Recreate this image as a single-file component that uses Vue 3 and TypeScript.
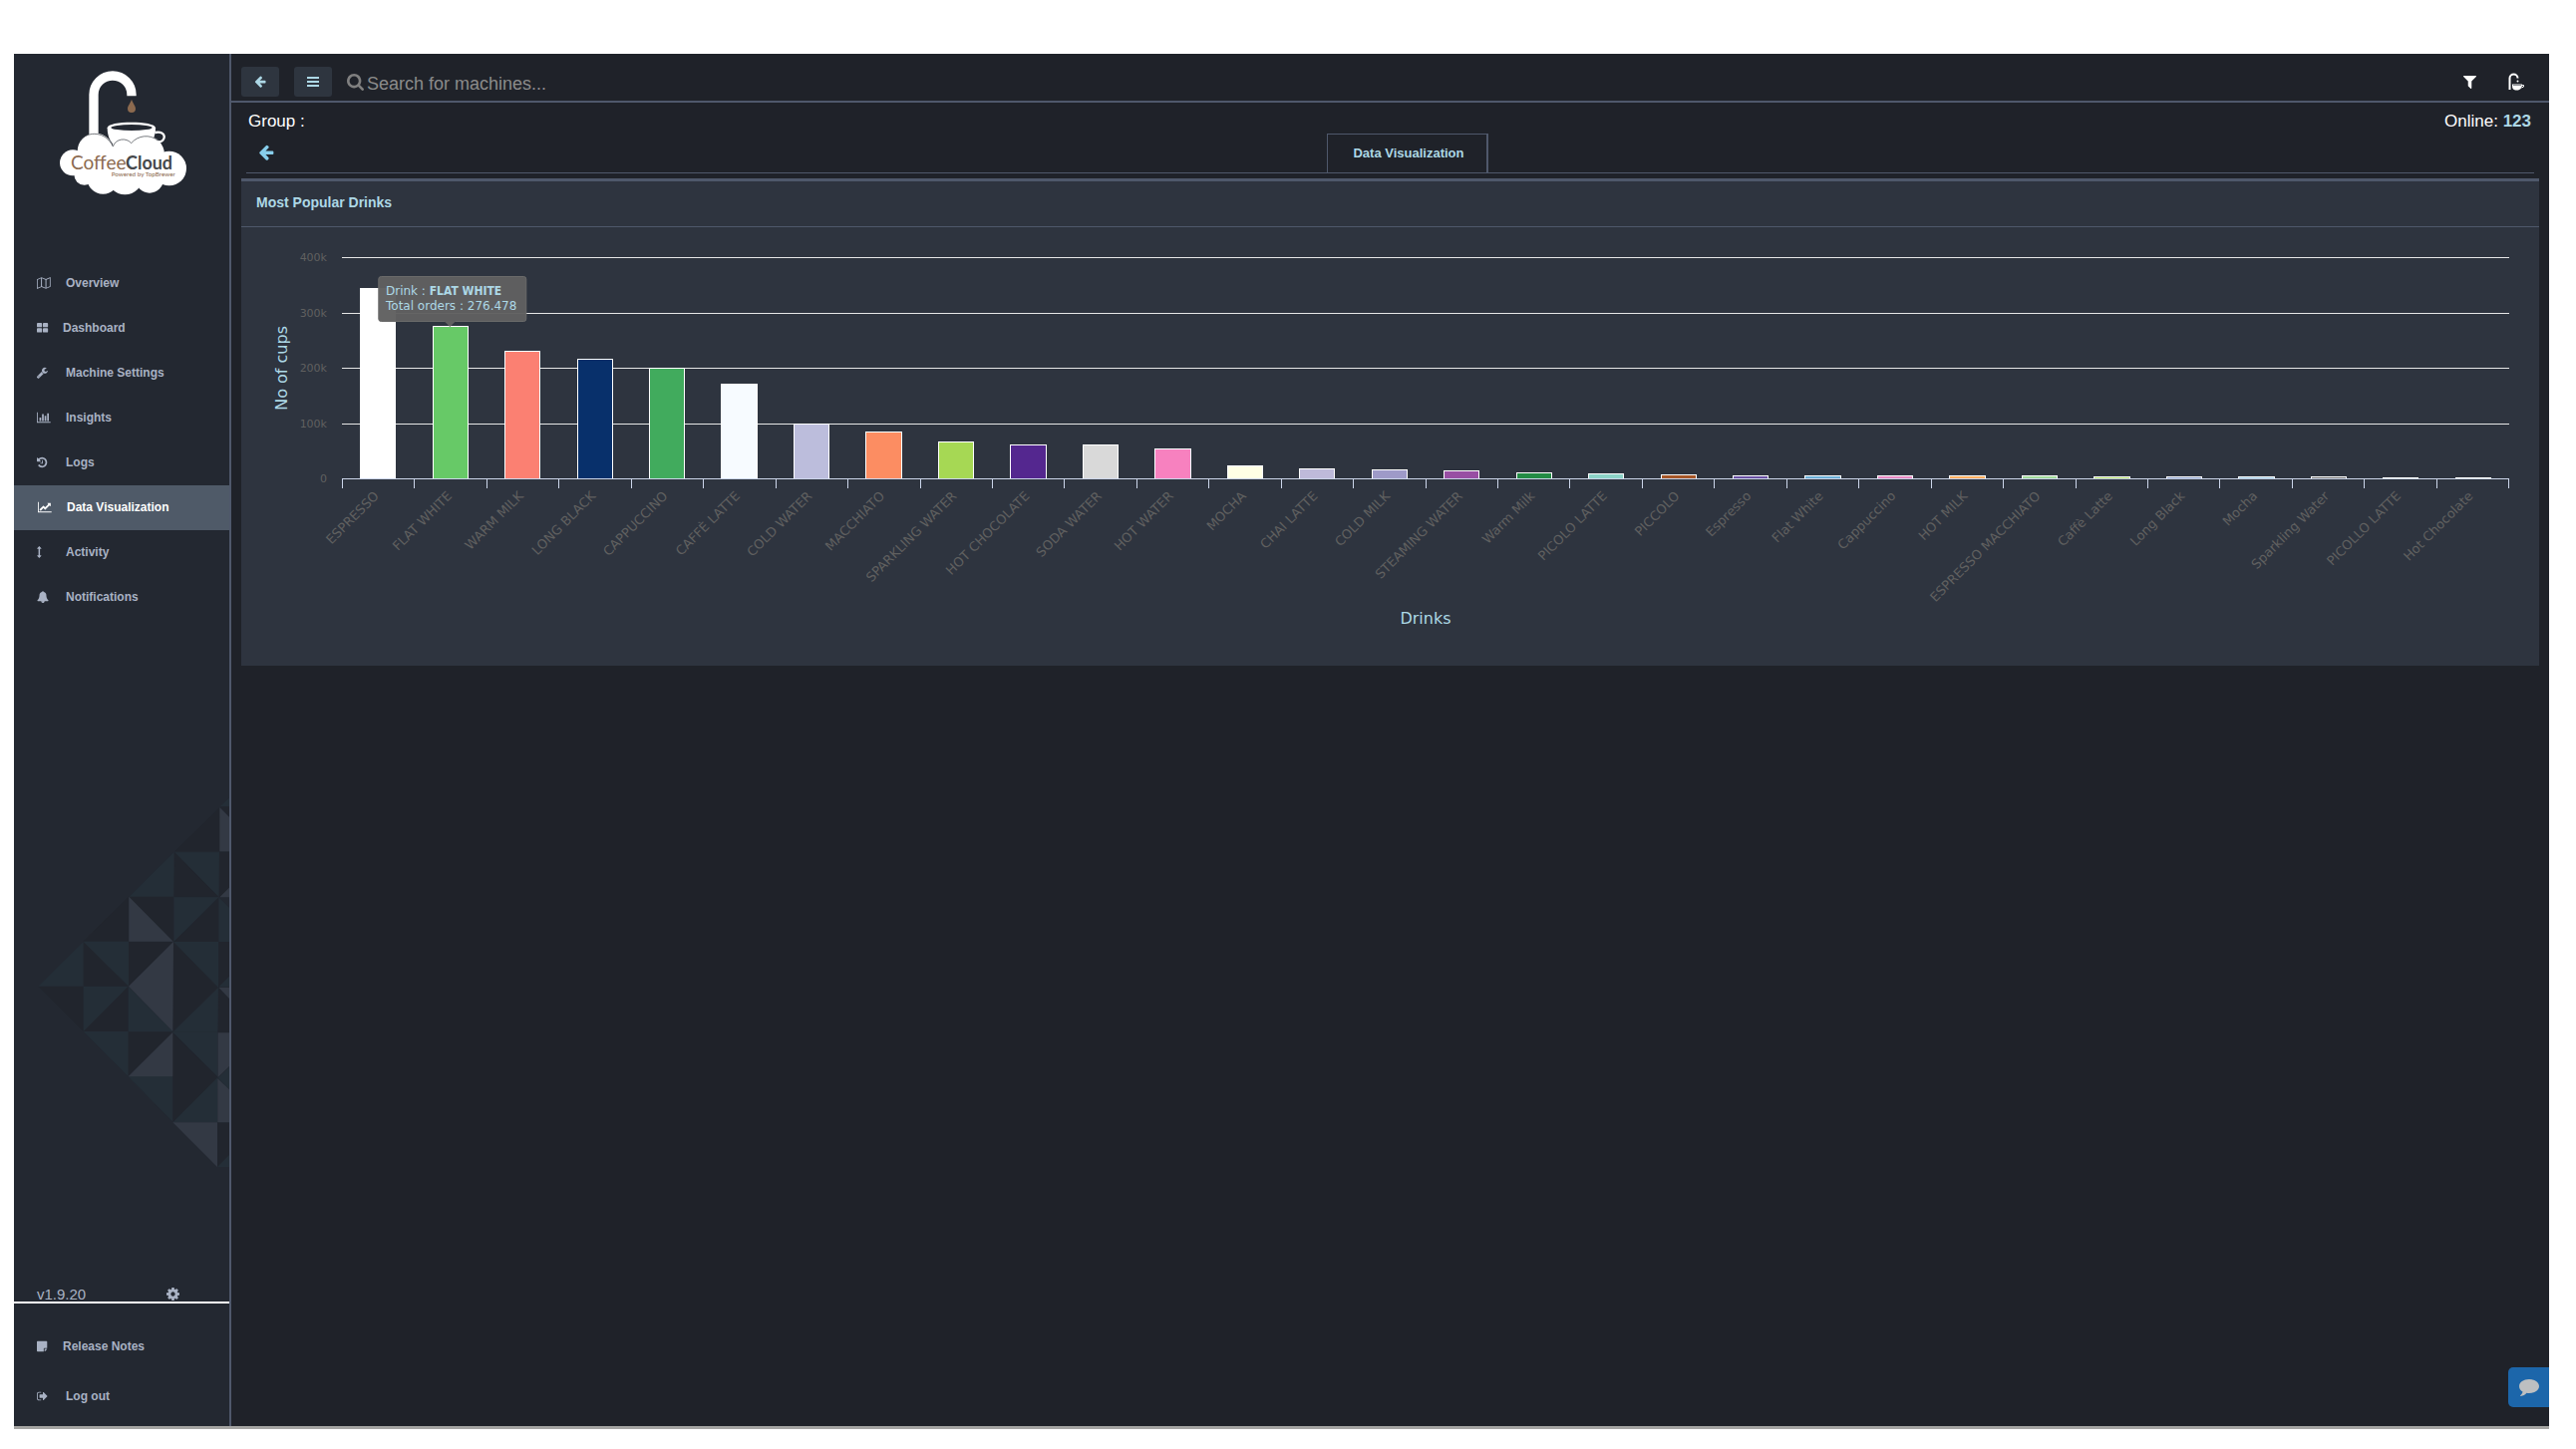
<script setup lang="ts">
interface Icon {
  box: string
  d: string
}
interface NavItem {
  label: string
  icon: Icon
  tight?: boolean
  active?: boolean
}
interface Drink {
  name: string
  cups: number
  color: string
}

const arrowLeft =
  'M1664 896v128q0 53-32.5 90.5t-84.5 37.5h-704l293 294q38 36 38 90t-38 90l-75 76q-37 37-90 37-52 0-91-37l-651-652q-37-37-37-90 0-52 37-91l651-650q38-38 91-38 52 0 90 38l75 74q38 38 38 91t-38 91l-293 293h704q52 0 84.5 37.5t32.5 90.5z'

const nav: NavItem[] = [
  {
    label: 'Overview',
    icon: {
      box: '0 0 2048 1792',
      d: 'M0 320L690 20L1350 290L2048 10V1450L1350 1760L690 1490L0 1780zM120 400V1600L610 1400V190zM760 180V1390L1280 1600V400zM1430 400V1600L1928 1370V190z'
    }
  },
  {
    label: 'Dashboard',
    tight: true,
    icon: {
      box: '0 0 1664 1792',
      d: 'M128 160h512q128 0 128 128v384q0 128-128 128h-512q-128 0-128-128v-384q0-128 128-128zM1024 160h512q128 0 128 128v384q0 128-128 128h-512q-128 0-128-128v-384q0-128 128-128zM128 928h512q128 0 128 128v384q0 128-128 128h-512q-128 0-128-128v-384q0-128 128-128zM1024 928h512q128 0 128 128v384q0 128-128 128h-512q-128 0-128-128v-384q0-128 128-128z'
    }
  },
  {
    label: 'Machine Settings',
    icon: {
      box: '90 0 1640 1792',
      d: 'M448 1472q0-26-19-45t-45-19-45 19-19 45 19 45 45 19 45-19 19-45zm644-420l-682 682q-37 37-90 37-52 0-91-37l-106-108q-38-36-38-90 0-53 38-91l681-681q39 98 114.5 173.5t173.5 114.5zm634-435q0 39-23 106-47 134-164.5 217.5t-258.5 83.5q-185 0-316.5-131.5t-131.5-316.5 131.5-316.5 316.5-131.5q58 0 121.5 16.5t107.5 46.5q16 11 16 28t-16 28l-293 169v224l193 107q5-3 79-48.5t135.5-81 70.5-35.5q15 0 23.5 10t8.5 25z'
    }
  },
  {
    label: 'Insights',
    icon: {
      box: '0 0 2048 1792',
      d: 'M640 896v512h-256v-512h256zm384-512v1024h-256v-1024h256zm1024 1152v128h-2048v-1536h128v1408h1920zm-640-896v768h-256v-768h256zm384-384v1152h-256v-1152h256z'
    }
  },
  {
    label: 'Logs',
    icon: {
      box: '128 0 1536 1792',
      d: 'M1664 896q0 156-61 298t-164 245-245 164-298 61q-172 0-327-72.5t-264-204.5q-7-10-6.5-22.5t8.5-20.5l137-138q10-9 25-9 16 2 23 12 73 95 179 147t225 52q104 0 198.5-40.5t163.5-109.5 109.5-163.5 40.5-198.5-40.5-198.5-109.5-163.5-163.5-109.5-198.5-40.5q-98 0-188 35.5t-160 101.5l137 138q31 30 14 69-17 40-59 40h-448q-26 0-45-19t-19-45v-448q0-42 40-59 39-17 69 14l130 129q107-101 244.5-156.5t284.5-55.5q156 0 298 61t245 164 164 245 61 298zm-640-288v448q0 14-9 23t-23 9h-320q-14 0-23-9t-9-23v-64q0-14 9-23t23-9h224v-352q0-14 9-23t23-9h64q14 0 23 9t9 23z'
    }
  },
  {
    label: 'Data Visualization',
    active: true,
    icon: {
      box: '0 0 2048 1792',
      d: 'M2048 1536v128h-2048v-1536h128v1408h1920zm-128-1248v435q0 21-19.5 29.5t-35.5-7.5l-121-121-633 633q-10 10-23 10t-23-10l-233-233-416 416-192-192 585-585q10-10 23-10t23 10l233 233 464-464-121-121q-16-16-7.5-35.5t29.5-19.5h435q14 0 23 9t9 23z'
    }
  },
  {
    label: 'Activity',
    icon: {
      box: '0 0 700 1792',
      d: 'M352 0l320 352q20 64-48 64h-160v960h160q68 0 48 64l-320 352-320-352q-20-64 48-64h160v-960h-160q-68 0-48-64z'
    }
  },
  {
    label: 'Notifications',
    icon: {
      box: '0 0 1792 1792',
      d: 'M912 1696q0-16-16-16-59 0-101.5-42.5t-42.5-101.5q0-16-16-16t-16 16q0 73 51.5 124.5t124.5 51.5q16 0 16-16zm816-288q0 52-38 90t-90 38h-448q0 106-75 181t-181 75-181-75-75-181h-448q-52 0-90-38t-38-90q50-42 91-88t85-119.5 74.5-158.5 50-206 19.5-260q0-152 117-282.5t307-158.5q-8-19-8-39 0-40 28-68t68-28 68 28 28 68q0 20-8 39 190 28 307 158.5t117 282.5q0 139 19.5 260t50 206 74.5 158.5 85 119.5 91 88z'
    }
  }
]

const footerNav: NavItem[] = [
  {
    label: 'Release Notes',
    tight: true,
    icon: {
      box: '0 0 1536 1792',
      d: 'M96 128h1344q96 0 96 96v928h-416q-96 0-96 96v416h-928q-96 0-96-96v-1344q0-96 96-96zM1152 1280h376q-12 64-56 108l-212 212q-44 44-108 56z'
    }
  },
  {
    label: 'Log out',
    icon: {
      box: '64 0 1600 1792',
      d: 'M704 1440q0 4 1 20t.5 26.5-3 23.5-10 19.5-20.5 6.5h-320q-119 0-203.5-84.5t-84.5-203.5v-704q0-119 84.5-203.5t203.5-84.5h320q13 0 22.5 9.5t9.5 22.5q0 4 1 20t.5 26.5-3 23.5-10 19.5-20.5 6.5h-320q-66 0-113 47t-47 113v704q0 66 47 113t113 47h312l11.5 1 11.5 3 8 5.5 7 9 2 13.5zm928-544q0 26-19 45l-544 544q-19 19-45 19t-45-19-19-45v-288h-448q-26 0-45-19t-19-45v-384q0-26 19-45t45-19h448v-288q0-26 19-45t45-19 45 19l544 544q19 19 19 45z'
    }
  }
]

const axisMax = 400000
const yTicks = ['400k', '300k', '200k', '100k', '0']

const drinks: Drink[] = [
  { name: 'ESPRESSO', cups: 345000, color: '#ffffff' },
  { name: 'FLAT WHITE', cups: 276478, color: '#67c967' },
  { name: 'WARM MILK', cups: 231500, color: '#fb8072' },
  { name: 'LONG BLACK', cups: 215500, color: '#08306b' },
  { name: 'CAPPUCCINO', cups: 200500, color: '#41ab5d' },
  { name: 'CAFFÈ LATTE', cups: 170500, color: '#f7fbff' },
  { name: 'COLD WATER', cups: 99500, color: '#bcbddc' },
  { name: 'MACCHIATO', cups: 85000, color: '#fc8d62' },
  { name: 'SPARKLING WATER', cups: 67500, color: '#a6d854' },
  { name: 'HOT CHOCOLATE', cups: 61500, color: '#54278f' },
  { name: 'SODA WATER', cups: 61500, color: '#d9d9d9' },
  { name: 'HOT WATER', cups: 54500, color: '#f781bf' },
  { name: 'MOCHA', cups: 23800, color: '#ffffe5' },
  { name: 'CHAI LATTE', cups: 18500, color: '#bebada' },
  { name: 'COLD MILK', cups: 16500, color: '#9e9ac8' },
  { name: 'STEAMING WATER', cups: 14800, color: '#984ea3' },
  { name: 'Warm Milk', cups: 11000, color: '#238b45' },
  { name: 'PICOLO LATTE', cups: 9200, color: '#8dd3c7' },
  { name: 'PICCOLO', cups: 7400, color: '#a65628' },
  { name: 'Espresso', cups: 5500, color: '#6a51a3' },
  { name: 'Flat White', cups: 5500, color: '#6baed6' },
  { name: 'Cappuccino', cups: 5500, color: '#e78ac3' },
  { name: 'HOT MILK', cups: 5500, color: '#fdae61' },
  { name: 'ESPRESSO MACCHIATO', cups: 5500, color: '#a1d99b' },
  { name: 'Caffè Latte', cups: 3700, color: '#b3de69' },
  { name: 'Long Black', cups: 3700, color: '#8da0cb' },
  { name: 'Mocha', cups: 3700, color: '#9ecae1' },
  { name: 'Sparkling Water', cups: 3700, color: '#737373' },
  { name: 'PICOLLO LATTE', cups: 1900, color: '#ffffff' },
  { name: 'Hot Chocolate', cups: 1900, color: '#ffffff' }
]
const hovered = 'FLAT WHITE'
</script>

<template>
  <div class="page">
    <div class="app">
      <aside class="sidebar">
        <svg class="logo" viewBox="180 94 381 375" role="img" aria-label="CoffeeCloud">
          <path d="M282 300V166a56 56 0 0 1 114 0v4" fill="none" stroke="#fff" stroke-width="28" />
          <path d="M396 180c4 12 12 20 12 28a12 12 0 0 1-24 0c0-8 8-16 12-28z" fill="#8c6a4f" />
          <path d="M323 266c0-22 145-22 145 0 0 26-10 44-26 60h-92c-18-16-27-34-27-60z" fill="#fff" />
          <ellipse cx="396" cy="265" rx="62" ry="9" fill="#232831" />
          <path d="M466 280c38-8 34 30 10 28" fill="none" stroke="#fff" stroke-width="7" />
          <g fill="#fff">
            <circle cx="287" cy="336" r="54" />
            <circle cx="219" cy="371" r="39" />
            <circle cx="254" cy="407" r="31" />
            <circle cx="310" cy="417" r="48" />
            <circle cx="376" cy="413" r="54" />
            <circle cx="450" cy="420" r="42" />
            <circle cx="509" cy="388" r="52" />
            <circle cx="438" cy="346" r="57" />
            <circle cx="370" cy="338" r="38" />
            <path d="M230 345h270v80H240z" />
          </g>
          <g fill="none" stroke="#33383f" stroke-width="2">
            <path d="M240 304c26-30 78-28 100 18 8-24 40-28 55-10 20-24 56-28 80-8" />
          </g>
          <text x="213" y="391" font-size="57" font-weight="400" fill="#8c6a4f">Coffee</text>
          <text x="378" y="391" font-size="54" font-weight="700" fill="#45484b">Cloud</text>
          <text x="335" y="413" font-size="19" fill="#8c6a4f">Powered by TopBrewer</text>
        </svg>

        <nav class="nav main-nav">
          <a
            v-for="item in nav"
            :key="item.label"
            href="#"
            class="nav-item"
            :class="{ active: item.active, tight: item.tight }"
          >
            <svg class="nav-icon" :viewBox="item.icon.box" preserveAspectRatio="xMinYMid" fill-rule="evenodd">
              <path :d="item.icon.d" />
            </svg>
            {{ item.label }}
          </a>
        </nav>

        <div class="pattern">
          <svg viewBox="110 50 579 1161" aria-hidden="true">
            <g fill="#21252d">
              <path d="M250 494V628H386zM386 494H521L386 628zM521 494L656 632 519 764zM385 628V764H250zM114 628H250V764z" />
              <path d="M385 766H519L385 900zM519 766L654 902 519 1036zM653 1038H690V1172H653z" />
              <path d="M250 492L386 358V492zM387 358H522V493zM657 360V494H522zM525 225L522 358H656zM659 225H690V358H659z" />
              <path d="M525 222L660 90V222zM662 88H690V118zM657 494H690V598L657 632zM657 634L690 668V768H655z" />
            </g>
            <g fill="#242e37">
              <path d="M114 628L250 494V628zM250 494H386V628zM521 494H656V632zM250 628H385L250 764zM385 628L519 764H385zM656 632L654 766H519z" />
              <path d="M250 764H385V900zM519 766H654V900zM385 900H519V1036zM654 902V1038H519zM653 1172L690 1135V1172z" />
              <path d="M522 360H657L522 494zM657 360L690 392V494H657zM388 358L522 225V358zM525 225H659L657 358z" />
              <path d="M662 86L690 60V86zM657 630L690 597V630zM655 904L690 870V940z" />
            </g>
            <g fill="#333944">
              <path d="M521 494L386 628 519 764zM519 766V900H385zM519 1038H653V1172zM387 358V493H520zM660 360L690 330V360z" />
              <path d="M660 90L690 120V222H660zM658 632H690V666zM655 768H690V868L655 902zM654 906L690 940V1038H654z" />
            </g>
          </svg>
        </div>

        <div class="version">
          <span>v1.9.20</span>
          <button type="button" class="bare" aria-label="Settings">
            <svg class="cog" viewBox="128 128 1536 1536">
              <path
                d="M1152 896q0-106-75-181t-181-75-181 75-75 181 75 181 181 75 181-75 75-181zm512-109v222q0 12-8 23t-20 13l-185 28q-19 54-39 91 35 50 107 138 10 12 10 25t-9 23q-27 37-99 108t-94 71q-12 0-26-9l-138-108q-44 23-91 38-16 136-29 186-7 28-36 28h-222q-14 0-24.5-8.5t-11.5-21.5l-28-184q-49-16-90-37l-141 107q-10 9-25 9-14 0-25-11-126-114-165-168-7-10-7-23 0-12 8-23 15-21 51-66.5t54-70.5q-27-50-41-99l-183-27q-13-2-21-12.5t-8-23.5v-222q0-12 8-23t19-13l186-28q14-46 39-92-40-57-107-138-10-12-10-24 0-10 9-23 26-36 98.5-107.5t94.5-71.5q13 0 26 10l138 107q44-23 91-38 16-136 29-186 7-28 36-28h222q14 0 24.5 8.5t11.5 21.5l28 184q49 16 90 37l142-107q9-9 24-9 13 0 25 10 129 119 165 170 7 8 7 22 0 12-8 23-15 21-51 66.5t-54 70.5q26 50 41 98l183 28q13 2 21 12.5t8 23.5z"
              />
            </svg>
          </button>
        </div>
        <nav class="nav footer-nav">
          <a
            v-for="item in footerNav"
            :key="item.label"
            href="#"
            class="nav-item"
            :class="{ tight: item.tight }"
          >
            <svg class="nav-icon" :viewBox="item.icon.box" preserveAspectRatio="xMinYMid">
              <path :d="item.icon.d" />
            </svg>
            {{ item.label }}
          </a>
        </nav>
      </aside>

      <main class="main">
        <header class="topbar">
          <button type="button" class="square" aria-label="Back">
            <svg class="glyph" viewBox="64 100 1664 1664"><path :d="arrowLeft" /></svg>
          </button>
          <button type="button" class="square" aria-label="Menu">
            <svg class="glyph" viewBox="0 0 12 12"><path d="M0 1h12v2H0zM0 5h12v2H0zM0 9h12v2H0z" /></svg>
          </button>
          <label class="search">
            <svg class="search-icon" viewBox="64 128 1664 1664">
              <path
                d="M1216 832q0-185-131.5-316.5t-316.5-131.5-316.5 131.5-131.5 316.5 131.5 316.5 316.5 131.5 316.5-131.5 131.5-316.5zm512 832q0 52-38 90t-90 38q-54 0-90-38l-343-342q-179 124-399 124-143 0-273.5-55.5t-225-150-150-225-55.5-273.5 55.5-273.5 150-225 225-150 273.5-55.5 273.5 55.5 225 150 150 225 55.5 273.5q0 220-124 399l343 343q37 37 37 90z"
              />
            </svg>
            <input type="text" placeholder="Search for machines..." aria-label="Search for machines" />
          </label>
          <button type="button" class="bare" aria-label="Filter">
            <svg class="filter" viewBox="190 256 1412 1412">
              <path
                d="M1595 295q17 41-14 70l-493 493v742q0 42-39 59-13 5-25 5-27 0-45-19l-256-256q-19-19-19-45v-486l-493-493q-31-29-14-70 17-39 59-39h1280q42 0 59 39z"
              />
            </svg>
          </button>
          <button type="button" class="bare" aria-label="Machines">
            <svg class="tap" viewBox="0 0 16 18">
              <path d="M1.500 17V5.500a4 4 0 0 1 8 0" fill="none" stroke="#fff" stroke-width="2" />
              <circle cx="9.500" cy="8.500" r="1" />
              <path d="M4 11.500h10c0 3-1 4-2 5l-2 1H7l-2-1c-1-1-1-3-1-5z" />
              <path d="M5 12.500h8" stroke="#8b8d92" stroke-width="1" />
              <path d="M13.500 12.500h2v1.500l-2 1" fill="none" stroke="#fff" stroke-width="1" />
            </svg>
          </button>
        </header>

        <div class="status">
          <span>Group :</span>
          <span>Online: <strong>123</strong></span>
        </div>

        <div class="tabs">
          <button type="button" class="bare back" aria-label="Back to previous view">
            <svg viewBox="64 100 1664 1664"><path :d="arrowLeft" /></svg>
          </button>
          <button type="button" class="tab">Data Visualization</button>
        </div>

        <section class="panel">
          <h2>Most Popular Drinks</h2>
          <div class="chart">
            <div class="y-title"><span>No of cups</span></div>
            <div class="y-labels">
              <span v-for="tick in yTicks" :key="tick">{{ tick }}</span>
            </div>
            <div class="plot">
              <div class="lines"><i v-for="n in 4" :key="n"></i></div>
              <div class="bars">
                <div v-for="drink in drinks" :key="drink.name" class="slot">
                  <div
                    class="bar"
                    :style="{ height: (drink.cups / axisMax) * 100 + '%', background: drink.color }"
                  >
                    <div v-if="drink.name === hovered" class="tooltip">
                      Drink : <b>FLAT WHITE</b><br />Total orders : 276.478
                    </div>
                  </div>
                </div>
              </div>
            </div>
            <div class="x-axis">
              <div v-for="drink in drinks" :key="drink.name" class="tick">
                <span>{{ drink.name }}</span>
              </div>
            </div>
            <div class="x-title">Drinks</div>
          </div>
        </section>
      </main>

      <button type="button" class="chat" aria-label="Open chat">
        <svg viewBox="0 0 20 17">
          <path
            d="M10 0c5.500 0 10 3 10 7s-4.500 7-10 7c-1 0-1.700 0-2.500-.2C6 15.500 4 16.700 1.500 17c-.6 0-.5-.5-.2-.8 1.200-1 2-2 2.200-3.600C1.300 11.300 0 9.300 0 7c0-4 4.500-7 10-7z"
          />
        </svg>
      </button>
    </div>
  </div>
</template>

<style>
body {
  margin: 0;
  background: #fff;
}
</style>

<style scoped>
.page {
  box-sizing: border-box;
  display: flex;
  min-height: 100vh;
  padding: 54px 27px 20px 14px;
  font-family: 'Liberation Sans', Arial, sans-serif;
}
.app {
  position: relative;
  display: flex;
  flex: 1;
  min-width: 0;
  background: #1f2229;
  border-bottom: 3px solid #a5a5a3;
}
svg {
  display: block;
  fill: currentColor;
}
button {
  font: inherit;
  cursor: pointer;
}
.bare {
  padding: 0;
  border: 0;
  background: none;
  color: inherit;
}

/* Sidebar */
.sidebar {
  display: flex;
  flex-direction: column;
  flex: none;
  width: 216px;
  border-right: 2px solid #4f586b;
  background: #232831;
  color: #a9b2c4;
}
.logo {
  width: 127px;
  height: 125px;
  margin: 17px 0 66px 46px;
  font-family: Lato, sans-serif;
}
.nav {
  display: flex;
  flex-direction: column;
}
.nav-item {
  box-sizing: border-box;
  display: flex;
  align-items: center;
  gap: 13px;
  height: 45px;
  padding-left: 23px;
  color: inherit;
  font-size: 12px;
  font-weight: 700;
  text-decoration: none;
}
.main-nav .nav-item {
  padding-bottom: 2px;
}
.nav-item.tight {
  gap: 10px;
}
.nav-item.active {
  padding-left: 24px;
  background: #4f5a68;
  color: #fff;
}
.nav-icon {
  width: 16px;
  height: 12px;
}
.pattern {
  display: flex;
  flex: 1;
  align-items: flex-end;
  justify-content: flex-end;
  padding-bottom: 106px;
}
.pattern svg {
  width: 193px;
  height: 387px;
}
.version {
  display: flex;
  align-items: center;
  justify-content: space-between;
  height: 16px;
  padding: 0 50px 0 23px;
  border-bottom: 2px solid #fff;
  font-size: 15px;
}
.cog {
  width: 13px;
  height: 13px;
}
.footer-nav {
  padding: 18px 0 5px;
}
.footer-nav .nav-item {
  height: 50px;
}

/* Main column */
.main {
  display: flex;
  flex-direction: column;
  flex: 1;
  min-width: 0;
}
.topbar {
  display: flex;
  align-items: center;
  gap: 15px;
  height: 38px;
  padding: 9px 25px 0 10px;
  border-bottom: 2px solid #4f586b;
  color: #fff;
}
.square {
  display: flex;
  align-items: center;
  justify-content: center;
  width: 38px;
  height: 30px;
  padding: 0;
  border: 0;
  border-radius: 3px;
  background: #2e353f;
  color: #add8e6;
}
.glyph {
  width: 12px;
  height: 12px;
}
.search {
  display: flex;
  flex: 1;
  align-items: center;
  gap: 3px;
  color: #808080;
}
.search-icon {
  width: 17px;
  height: 17px;
}
.search input {
  flex: 1;
  height: 24px;
  margin-top: 4px;
  padding: 0;
  border: 0;
  outline: 0;
  background: none;
  color: #fff;
  font: 18px 'Liberation Sans', Arial, sans-serif;
}
.search input::placeholder {
  color: #8b8b8b;
  opacity: 1;
}
.filter {
  width: 13px;
  height: 13px;
  margin-right: 17px;
}
.tap {
  width: 16px;
  height: 18px;
}
.status {
  display: flex;
  justify-content: space-between;
  height: 25px;
  padding: 6px 18px 0 17px;
  color: #fff;
  font-size: 17px;
  line-height: 25px;
}
.status strong {
  color: #add8e6;
}
.tabs {
  display: grid;
  grid-template-columns: 35px 1fr;
  margin: 0 15px;
  border-bottom: 1px solid #4f586b;
}
.back {
  padding: 0 0 2px 12px;
  color: #87ceeb;
}
.back svg {
  width: 16px;
  height: 16px;
}
.tab {
  justify-self: center;
  height: 39px;
  padding: 0 22px 2px 25px;
  border: 1px solid #4f586b;
  border-width: 1px 2px 0 1px;
  background: none;
  color: #add8e6;
  font-size: 13px;
  font-weight: 700;
}

/* Chart panel */
.panel {
  margin: 5px 10px 0;
  border-top: 3px solid #4f586b;
  background: #2e343f;
}
.panel h2 {
  margin: 0;
  padding: 0 0 2px 15px;
  border-bottom: 1px solid #4f586b;
  color: #add8e6;
  font-size: 14px;
  font-weight: 700;
  line-height: 43px;
}
.chart {
  display: grid;
  grid-template-columns: 22px 35px 1fr;
  grid-template-rows: 222px 131px 20px;
  padding: 30px 30px 37px 29px;
  font-family: 'DejaVu Sans', Verdana, sans-serif;
}
.y-title {
  display: flex;
  align-items: center;
  justify-content: center;
  color: #add8e6;
  font-size: 16px;
}
.y-title span {
  writing-mode: vertical-rl;
  transform: rotate(180deg);
}
.y-labels {
  display: flex;
  flex-direction: column;
  justify-content: space-between;
  align-items: flex-end;
  margin: -6px 0 -8px;
  color: #606060;
  font-size: 11px;
  line-height: 14px;
}
.plot {
  display: grid;
  margin-left: 15px;
}
.lines,
.bars {
  display: flex;
  grid-area: 1 / 1;
  min-height: 0;
}
.lines {
  flex-direction: column;
}
.lines i {
  flex: 1;
  border-top: 1px solid #e6e6e6;
}
.slot {
  display: flex;
  flex: 1;
  align-items: flex-end;
  justify-content: center;
}
.bar {
  position: relative;
  box-sizing: border-box;
  width: 50%;
  border: 1px solid #fff;
  border-bottom: 0;
}
.tooltip {
  position: absolute;
  bottom: 100%;
  left: 50%;
  z-index: 1;
  margin: 0 0 5px 2px;
  padding: 7px 9px 7px 7px;
  border: 1px solid #6a6a6a;
  border-radius: 3px;
  background: rgb(96 96 96 / 97%);
  color: #add8e6;
  font-size: 12px;
  line-height: 15px;
  white-space: nowrap;
  transform: translateX(-50%);
}
.tooltip b {
  font-family: 'DejaVu Sans Condensed', 'DejaVu Sans', sans-serif;
}
.tooltip::after {
  content: '';
  position: absolute;
  top: 100%;
  left: 50%;
  margin-left: -8px;
  border: 6px solid transparent;
  border-top-color: #606060;
  border-bottom: 0;
}
.x-axis {
  display: flex;
  grid-column: 3;
  align-items: flex-start;
  margin-left: 15px;
  border-top: 1px solid #ccd6eb;
}
.tick {
  position: relative;
  box-sizing: border-box;
  flex: 1;
  height: 9px;
  border-left: 1px solid #ccd6eb;
}
.tick:last-child {
  border-right: 1px solid #ccd6eb;
}
.tick span {
  position: absolute;
  top: 9px;
  right: 50%;
  margin-right: 7px;
  color: #606060;
  font-size: 13px;
  line-height: 16px;
  white-space: nowrap;
  transform: rotate(-45deg);
  transform-origin: 100% 0;
}
.x-title {
  grid-column: 3;
  margin-left: 15px;
  color: #add8e6;
  font-size: 16px;
  line-height: 20px;
  text-align: center;
}

.chat {
  position: absolute;
  right: 0;
  bottom: 19px;
  display: flex;
  align-items: center;
  width: 41px;
  height: 40px;
  padding: 0 10px 0 11px;
  border: 0;
  border-radius: 5px 0 0 5px;
  background: #1c66aa;
  color: #bdbfc1;
}
.chat svg {
  width: 20px;
  height: 17px;
}
</style>
